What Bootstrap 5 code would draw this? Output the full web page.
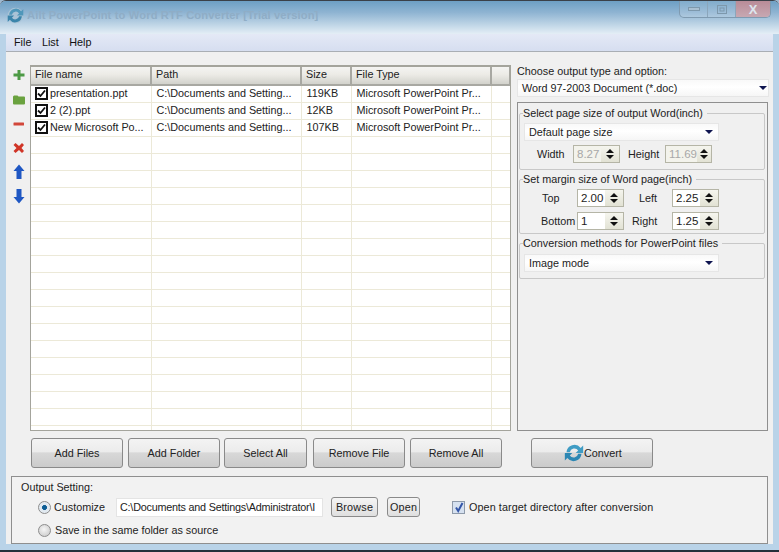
<!DOCTYPE html>
<html lang="en">
<head>
<meta charset="utf-8">
<title>Ailt PowerPoint to Word RTF Converter</title>
<link href="https://cdn.jsdelivr.net/npm/bootstrap@5.3.0/dist/css/bootstrap.min.css" rel="stylesheet">
<style>
html,body{margin:0;padding:0;background:#9fb8cf}
body{font:10.8px/13px "Liberation Sans",Arial,sans-serif;color:#222}
.app-win{width:779px;height:552px;overflow:hidden;background:#b9d3e8;border-top:1px solid #3a4048;border-bottom:2px solid #24303a;border-radius:6px 6px 0 0}
.title-strip{height:33px;padding:0 8px 0 7px;background:linear-gradient(#6d9fc4 0,#8fb4d2 35%,#c3d8e8 75%,#e4eef6 100%)}
.title-lead{margin-top:-5px}
.title-txt{font-weight:700;font-size:11.2px;color:#8fadc6;letter-spacing:.12px;margin-left:-1px}
.win-ctl{width:92px;height:17px;margin-top:-16px;border:1px solid #7f9ab0;border-top:0;border-radius:0 0 5px 5px;overflow:hidden;background:rgba(255,255,255,.14)}
.win-ctl>span{display:flex;align-items:center;justify-content:center;height:100%;border-right:1px solid #8ba6bb}
.w-min,.w-max{width:28px}
.w-close{flex:1;border-right:0!important;background:linear-gradient(#b98c98,#c7a8b2);color:#dde6ee;font-weight:700;font-size:13px}
.menu-strip{height:18px;margin:0 6px;padding:0 8px;gap:10.5px;background:linear-gradient(#e4e9f6,#d6def0);border-bottom:1px solid #a9aeb4;color:#111}
.work{height:492px;margin:0 6px;background:#f0f0f0;padding:13px 4px 0 5px}
.top-zone{height:366px}
.rail{width:15px;margin-right:4px;padding-top:2px;gap:8.3px}
.rail svg{display:block;width:14px;height:16px}
.grid-box{width:481px;height:366px;overflow:hidden;background:#fff;border:1px solid #a4a49c;border-top:2px solid #a4a49c}
.grid-tbl{table-layout:fixed;width:480px;margin:0;border-collapse:collapse;--bs-table-bg:transparent}
.grid-tbl th{height:18px;padding:0 0 2px 4px;font-weight:400;background:linear-gradient(#f4f4f2 0,#ecebe6 45%,#d2d2cc 100%);border:2px solid #a8a8a2;border-width:0 2px 2px 0;vertical-align:middle;color:#222}
.grid-tbl td{height:17px;padding:0 0 0 5px;border:0;border-bottom:1px solid #ece9d8;border-right:1px solid #ece9d8;white-space:nowrap;overflow:hidden;vertical-align:middle;color:#222}
.grid-tbl td:first-child{padding-left:4px}
.chk{display:inline-block;width:13px;height:13px;border:2px solid #111;background:#fff;vertical-align:-3px;margin-right:2px;position:relative}
.chk svg{position:absolute;left:0;top:0;width:9px;height:9px}
.side{width:252px;margin-left:6px}
.side-cap{height:13px}
.fake-sel{height:18px;background:linear-gradient(#f9f9f9,#fff 45%,#f6f6f6);border:1px solid #e6e6e6;padding-left:4px;padding-right:1px;margin-top:1px;color:#222}
.caret-dn{width:0;height:0;border-left:4px solid transparent;border-right:4px solid transparent;border-top:4px solid #0f1550}
.opt-panel{width:251px;height:329px;margin-top:5px;padding:4px 2px 0 1px;border:1px solid #8f8f8f;background:#f0f0f0}
.grp{border:1px solid #c8c8c8;border-radius:2px;margin:0;padding:0 4px}
.grp legend{float:none;width:auto;font-size:10.8px;line-height:13px;margin:0 0 0 -1px;padding:0 4px 0 0;color:#222}
.g1{height:63px}.g2{height:61px;margin-top:3px}.g3{height:42px;margin-top:3px}
.g-sel{width:195px;height:18px;margin-top:3px;padding:0 5px 0 4px}
.g3 .g-sel{margin-top:4px}
.spin-row{height:18px;margin-top:5px}
.g1 .spin-row{margin-top:4px}
.g2 legend + .spin-row{margin-top:3px}
.lb{display:block;flex:none}
.spin{width:47px;height:18px;flex:none;border:1px solid #b5b5a6;background:#fff;padding-left:3px;font-size:11.5px}
.spin.off{background:#f3f3ec;color:#a8a8a8}
.spin-btn{margin-left:auto;width:18px;height:16px;background:linear-gradient(#f5f5ee,#e2e2d4);flex-direction:column;gap:2px}
.up-t,.dn-t{width:0;height:0;border-left:4px solid transparent;border-right:4px solid transparent}
.up-t{border-bottom:4px solid #111}.dn-t{border-top:4px solid #111}
.act-row{height:32px;margin-top:7px;padding-left:20px}
.big-btn{width:92px;height:30px;padding:0;font-size:10.8px;line-height:13px;color:#222;border:1px solid #8a8a8a;border-radius:3px;background:linear-gradient(#f3f3f3 0,#ececec 45%,#d8d8d8 50%,#cbcbcb 100%)}
.big-btn+.big-btn{margin-left:5px}
.big-btn+.b-sel{width:83px;margin-left:4px}
.big-btn.b-sel+.big-btn{margin-left:6px}
.b-conv{width:122px;margin-left:29px!important;padding-left:32px;justify-content:flex-start}
.out-box{height:68px;margin-top:6px;margin-right:1px;border:1px solid #8f8f8f;padding:4px 0 0 9px;background:#f2f2f2}
.out-row{padding-left:17px;height:20px;margin-top:3px}
.radio-x{display:inline-block;flex:none;width:13px;height:13px;border-radius:50%;border:1px solid #8d8d8d;background:radial-gradient(circle at 45% 40%,#f6f6f6,#c4c4c4)}
.radio-x.on{background:radial-gradient(circle,#0c5d95 0,#0c5d95 28%,#dfe8f0 36%,#e8eef3 100%)}
.cust-lb{margin-left:3px;width:51px;flex:none;white-space:nowrap}
.path-in{width:207px;height:19px;margin-left:11px;padding-left:3px;line-height:17px;border:1px solid #e4e4e4;background:#fff;overflow:hidden;white-space:nowrap;letter-spacing:-.22px}
.sm-btn{height:20px;padding:0;font-size:10.8px;line-height:13px;letter-spacing:.2px;color:#222;border:1px solid #8a8a8a;border-radius:3px;background:linear-gradient(#f5f5f5,#dfdfdf)}
.b-brw{width:47px;margin-left:8px}.b-opn{width:33px;margin-left:9px}
.chk-blue{display:inline-block;flex:none;margin-left:32px;width:13px;height:13px;border:1px solid #8e9aaa;background:#d6e1f0;position:relative}
.chk-blue svg{position:absolute;left:1px;top:0;width:10px;height:11px}
.chk-lb{margin-left:4px;letter-spacing:.08px}
.save-row{margin-top:3px}
</style>
</head>
<body>
<div class="app-win d-flex flex-column">
  <div class="title-strip d-flex align-items-center justify-content-between">
    <div class="title-lead d-flex align-items-center gap-1">
      <svg width="17" height="17" viewBox="0 0 24 24"><circle cx="12" cy="12" r="11" fill="#a9c3d6"/><path d="M3 11A9.500 9.500 0 0 1 20 6L23 3V12H14L17 9A5.500 5.500 0 0 0 7 11Z" fill="#4f97ba"/><path d="M21 13A9.500 9.500 0 0 1 4 18L1 21V12H10L7 15A5.500 5.500 0 0 0 17 13Z" fill="#3b85ab"/></svg>
      <span class="title-txt">Ailt PowerPoint to Word RTF Converter [Trial version]</span>
    </div>
    <div class="win-ctl d-flex">
      <span class="w-min"><svg width="12" height="6" viewBox="0 0 12 6"><rect x=".5" y="1.500" width="11" height="3" fill="#a9c0d2" stroke="#7d98ac"/></svg></span>
      <span class="w-max"><svg width="10" height="9" viewBox="0 0 10 9"><rect x=".5" y=".5" width="9" height="8" fill="none" stroke="#7d98ac"/><rect x="3" y="3" width="4" height="3" fill="none" stroke="#7d98ac"/></svg></span>
      <span class="w-close">X</span>
    </div>
  </div>
  <div class="menu-strip d-flex align-items-center"><span>File</span><span>List</span><span>Help</span></div>
  <div class="work d-flex flex-column">
    <div class="top-zone d-flex">
      <div class="rail d-flex flex-column align-items-center">
        <svg viewBox="0 0 14 16"><path d="M5.500 3h3v3.500H12.500v3H8.500V13h-3V9.500H1.500v-3h4z" fill="#4d9a45"/></svg>
        <svg viewBox="0 0 14 16"><path d="M1 5.500 2 4.500h3.500l1 1H12a1 1 0 0 1 1 1V12.500a1 1 0 0 1-1 1H2a1 1 0 0 1-1-1z" fill="#6aa23f"/></svg>
        <svg viewBox="0 0 14 16"><rect x="1.500" y="6.500" width="10.500" height="3" rx=".5" fill="#d2473a"/></svg>
        <svg viewBox="0 0 14 16"><path d="M1.500 5 3.500 3 7 6 10 3l2 2L9.500 8l2.500 3-2 2L7 10 3.500 13l-2-2L4.500 8z" fill="#d03527"/></svg>
        <svg viewBox="0 0 14 16"><path d="M7 .5l5.500 6.500H9.500v8h-5V7H1.500z" fill="#1f57c3"/></svg>
        <svg viewBox="0 0 14 16"><path d="M7 15.500l5.500-6.500H9.500V1h-5v8H1.500z" fill="#1f57c3"/></svg>
      </div>
      <div class="grid-box">
        <table class="table grid-tbl">
          <colgroup><col style="width:120px"><col style="width:150px"><col style="width:50px"><col style="width:140px"><col></colgroup>
          <thead><tr><th>File name</th><th>Path</th><th>Size</th><th>File Type</th><th></th></tr></thead>
          <tbody>
            <tr><td><span class="chk"><svg viewBox="0 0 9 9"><path d="M1 4.500 3.500 7 8 1.500" fill="none" stroke="#111" stroke-width="1.800"/></svg></span>presentation.ppt</td><td>C:\Documents and Setting...</td><td>119KB</td><td>Microsoft PowerPoint Pr...</td><td></td></tr>
            <tr><td><span class="chk"><svg viewBox="0 0 9 9"><path d="M1 4.500 3.500 7 8 1.500" fill="none" stroke="#111" stroke-width="1.800"/></svg></span>2 (2).ppt</td><td>C:\Documents and Setting...</td><td>12KB</td><td>Microsoft PowerPoint Pr...</td><td></td></tr>
            <tr><td><span class="chk"><svg viewBox="0 0 9 9"><path d="M1 4.500 3.500 7 8 1.500" fill="none" stroke="#111" stroke-width="1.800"/></svg></span>New Microsoft Po...</td><td>C:\Documents and Setting...</td><td>107KB</td><td>Microsoft PowerPoint Pr...</td><td></td></tr>
            <tr><td></td><td></td><td></td><td></td><td></td></tr><tr><td></td><td></td><td></td><td></td><td></td></tr><tr><td></td><td></td><td></td><td></td><td></td></tr><tr><td></td><td></td><td></td><td></td><td></td></tr><tr><td></td><td></td><td></td><td></td><td></td></tr><tr><td></td><td></td><td></td><td></td><td></td></tr><tr><td></td><td></td><td></td><td></td><td></td></tr><tr><td></td><td></td><td></td><td></td><td></td></tr><tr><td></td><td></td><td></td><td></td><td></td></tr><tr><td></td><td></td><td></td><td></td><td></td></tr><tr><td></td><td></td><td></td><td></td><td></td></tr><tr><td></td><td></td><td></td><td></td><td></td></tr><tr><td></td><td></td><td></td><td></td><td></td></tr><tr><td></td><td></td><td></td><td></td><td></td></tr><tr><td></td><td></td><td></td><td></td><td></td></tr><tr><td></td><td></td><td></td><td></td><td></td></tr><tr><td></td><td></td><td></td><td></td><td></td></tr><tr><td></td><td></td><td></td><td></td><td></td></tr>
          </tbody>
        </table>
      </div>
      <div class="side">
        <div class="side-cap">Choose output type and option:</div>
        <div class="fake-sel d-flex align-items-center justify-content-between"><span>Word 97-2003 Document (*.doc)</span><i class="caret-dn"></i></div>
        <div class="opt-panel">
          <fieldset class="grp g1">
            <legend>Select page size of output Word(inch)</legend>
            <div class="fake-sel g-sel d-flex align-items-center justify-content-between"><span>Default page size</span><i class="caret-dn"></i></div>
            <div class="spin-row d-flex align-items-center">
              <span class="lb" style="width:49px;padding-left:13px">Width</span>
              <span class="spin off d-flex align-items-center">8.27<span class="spin-btn d-flex align-items-center justify-content-center"><i class="up-t"></i><i class="dn-t"></i></span></span>
              <span class="lb" style="width:45px;padding-left:8px">Height</span>
              <span class="spin off d-flex align-items-center">11.69<span class="spin-btn d-flex align-items-center justify-content-center"><i class="up-t"></i><i class="dn-t"></i></span></span>
            </div>
          </fieldset>
          <fieldset class="grp g2">
            <legend>Set margin size of Word page(inch)</legend>
            <div class="spin-row d-flex align-items-center">
              <span class="lb" style="width:53px;padding-left:18px">Top</span>
              <span class="spin d-flex align-items-center">2.00<span class="spin-btn d-flex align-items-center justify-content-center"><i class="up-t"></i><i class="dn-t"></i></span></span>
              <span class="lb" style="width:48px;padding-left:15px">Left</span>
              <span class="spin d-flex align-items-center">2.25<span class="spin-btn d-flex align-items-center justify-content-center"><i class="up-t"></i><i class="dn-t"></i></span></span>
            </div>
            <div class="spin-row d-flex align-items-center">
              <span class="lb" style="width:53px;padding-left:17px">Bottom</span>
              <span class="spin d-flex align-items-center">1<span class="spin-btn d-flex align-items-center justify-content-center"><i class="up-t"></i><i class="dn-t"></i></span></span>
              <span class="lb" style="width:48px;padding-left:8px">Right</span>
              <span class="spin d-flex align-items-center">1.25<span class="spin-btn d-flex align-items-center justify-content-center"><i class="up-t"></i><i class="dn-t"></i></span></span>
            </div>
          </fieldset>
          <fieldset class="grp g3">
            <legend>Conversion methods for PowerPoint files</legend>
            <div class="fake-sel g-sel d-flex align-items-center justify-content-between"><span>Image mode</span><i class="caret-dn"></i></div>
          </fieldset>
        </div>
      </div>
    </div>
    <div class="act-row d-flex">
      <button class="btn big-btn">Add Files</button>
      <button class="btn big-btn">Add Folder</button>
      <button class="btn big-btn b-sel">Select All</button>
      <button class="btn big-btn">Remove File</button>
      <button class="btn big-btn">Remove All</button>
      <button class="btn big-btn b-conv d-flex align-items-center">
        <svg width="20" height="20" viewBox="0 0 24 24"><path d="M3 11A9.500 9.500 0 0 1 20 6L23 3V12H14L17 9A5.500 5.500 0 0 0 7 11Z" fill="#3f9cc4"/><path d="M21 13A9.500 9.500 0 0 1 4 18L1 21V12H10L7 15A5.500 5.500 0 0 0 17 13Z" fill="#2c87b3"/></svg>Convert</button>
    </div>
    <div class="out-box">
      <div>Output Setting:</div>
      <div class="out-row d-flex align-items-center">
        <span class="radio-x on"></span><span class="cust-lb">Customize</span>
        <span class="path-in">C:\Documents and Settings\Administrator\I</span>
        <button class="btn sm-btn b-brw">Browse</button>
        <button class="btn sm-btn b-opn">Open</button>
        <span class="chk-blue"><svg viewBox="0 0 10 11"><path d="M2 5.500 4.200 9 8.500 1" fill="none" stroke="#3456a8" stroke-width="2"/></svg></span>
        <span class="chk-lb">Open target directory after conversion</span>
      </div>
      <div class="out-row save-row d-flex align-items-center"><span class="radio-x"></span><span class="ms-1">Save in the same folder as source</span></div>
    </div>
  </div>
</div>
<script src="https://cdn.jsdelivr.net/npm/bootstrap@5.3.0/dist/js/bootstrap.bundle.min.js"></script>
</body>
</html>
